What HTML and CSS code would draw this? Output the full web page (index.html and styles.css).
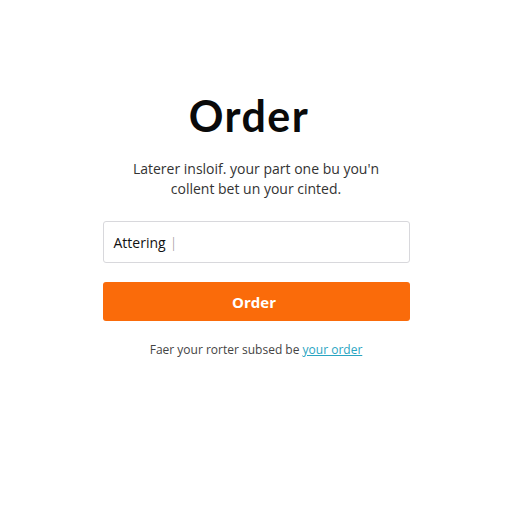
FILE: index.html
```html
<!DOCTYPE html>
<html lang="en">
<head>
    <meta charset="UTF-8">
    <title>Order</title>
    <link rel="stylesheet" href="styles.css">
</head>
<body>
    <div class="order-box">
        <h1>Order</h1>
        <p class="intro">Laterer insloif. your part one bu you'n<br>collent bet un your cinted.</p>

        <div class="field">Attering <span class="caret">|</span></div>

        <button class="order-btn">Order</button>

        <p class="note">Faer your rorter subsed be <a href="#">your order</a></p>
    </div>
</body>
</html>
```

FILE: styles.css
```css
body {
    font-family: Lato, "Open Sans", sans-serif;
    background: #fff;
    margin: 0;
}

.order-box {
    width: 307px;
    margin: 0 auto;
    padding-top: 90px;
    display: flex;
    flex-direction: column;
    align-items: stretch;
}

h1 {
    font-size: 43px;
    font-weight: 700;
    letter-spacing: 1.5px;
    color: #0a0a0a;
    text-align: center;
    margin: 0 14px 0 0;
    line-height: 52px;
}

.intro {
    font-family: "Open Sans", sans-serif;
    font-size: 14px;
    line-height: 20px;
    color: #333;
    text-align: center;
    margin: 17px 0 0;
}

.field {
    margin-top: 22px;
    height: 42px;
    box-sizing: border-box;
    border: 1px solid #d8d8dc;
    border-radius: 3px;
    padding: 0 10px;
    display: flex;
    align-items: center;
    font-family: "Open Sans", sans-serif;
    font-size: 14px;
    color: #111;
}

.caret {
    color: #888;
    margin-left: 4px;
    font-weight: 300;
}

.order-btn {
    margin-top: 19px;
    height: 39px;
    border: none;
    border-radius: 3px;
    background: #fa6b0a;
    color: #fff;
    font-family: "Open Sans", sans-serif;
    font-size: 15px;
    font-weight: 700;
    padding-right: 10px;
}

.note {
    font-family: "Open Sans", sans-serif;
    font-size: 12px;
    color: #444;
    text-align: center;
    margin: 20px 0 0;
}

.note a {
    color: #2aa5c2;
}
```
